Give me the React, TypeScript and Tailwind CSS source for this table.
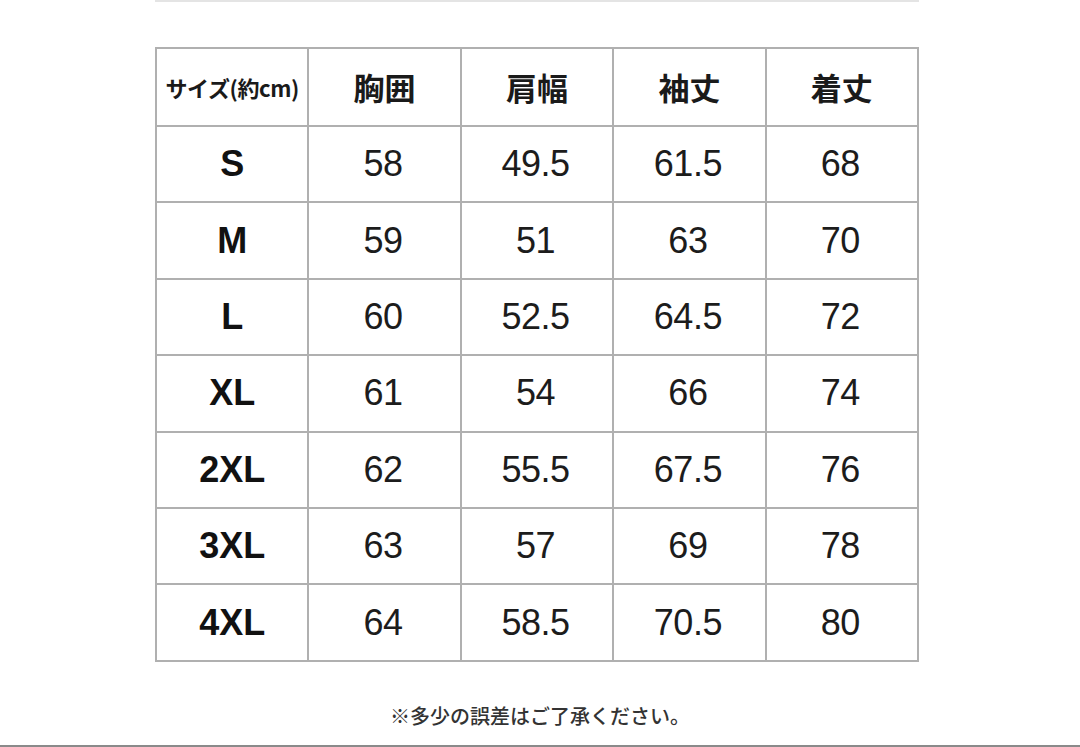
import React from 'react';

const headers = ['胸囲', '肩幅', '袖丈', '着丈'];

const rows: [string, string, string, string, string][] = [
  ['S', '58', '49.5', '61.5', '68'],
  ['M', '59', '51', '63', '70'],
  ['L', '60', '52.5', '64.5', '72'],
  ['XL', '61', '54', '66', '74'],
  ['2XL', '62', '55.5', '67.5', '76'],
  ['3XL', '63', '57', '69', '78'],
  ['4XL', '64', '58.5', '70.5', '80'],
];

const jp = "font-['Noto_Sans_CJK_JP',sans-serif]";
const num = "font-['Liberation_Sans','Arial',sans-serif]";
const cell = 'flex items-center justify-center border-r-2 border-b-2 border-[#b0b0b0]';

export default function App() {
  return (
    <div className="w-[1080px] h-[747px] bg-white flex flex-col overflow-hidden">
      <div className="ml-[155px] w-[764px] h-[2px] bg-[#e4e4e4]" />

      <div className="ml-[155px] mt-[45px] w-[764px] grid grid-cols-5 border-l-2 border-t-2 border-[#b0b0b0]">
        <div className={`${cell} h-[78px]`}>
          <span className={`${jp} font-bold text-[22px] tracking-[-0.4px] text-[#1a1a1a]`}>
            サイズ(約cm)
          </span>
        </div>
        {headers.map((h) => (
          <div key={h} className={`${cell} h-[78px]`}>
            <span className={`${jp} font-bold text-[31px] text-[#1a1a1a]`}>{h}</span>
          </div>
        ))}

        {rows.map((r) => (
          <React.Fragment key={r[0]}>
            <div className={`${cell} h-[76.4px]`}>
              <span className={`${num} font-bold text-[36px] text-[#111]`}>{r[0]}</span>
            </div>
            {r.slice(1).map((v, i) => (
              <div key={i} className={`${cell} h-[76.4px]`}>
                <span className={`${num} text-[36px] tracking-[-0.5px] text-[#1c1c1c] pr-[3px]`}>{v}</span>
              </div>
            ))}
          </React.Fragment>
        ))}
      </div>

      <p className={`${jp} mt-[42px] text-center text-[20px] leading-[24px] font-medium text-[#333]`}>
        ※多少の誤差はご了承ください。
      </p>

      <div className="mt-auto h-[2px] bg-[#8a8a8a]" />
    </div>
  );
}
